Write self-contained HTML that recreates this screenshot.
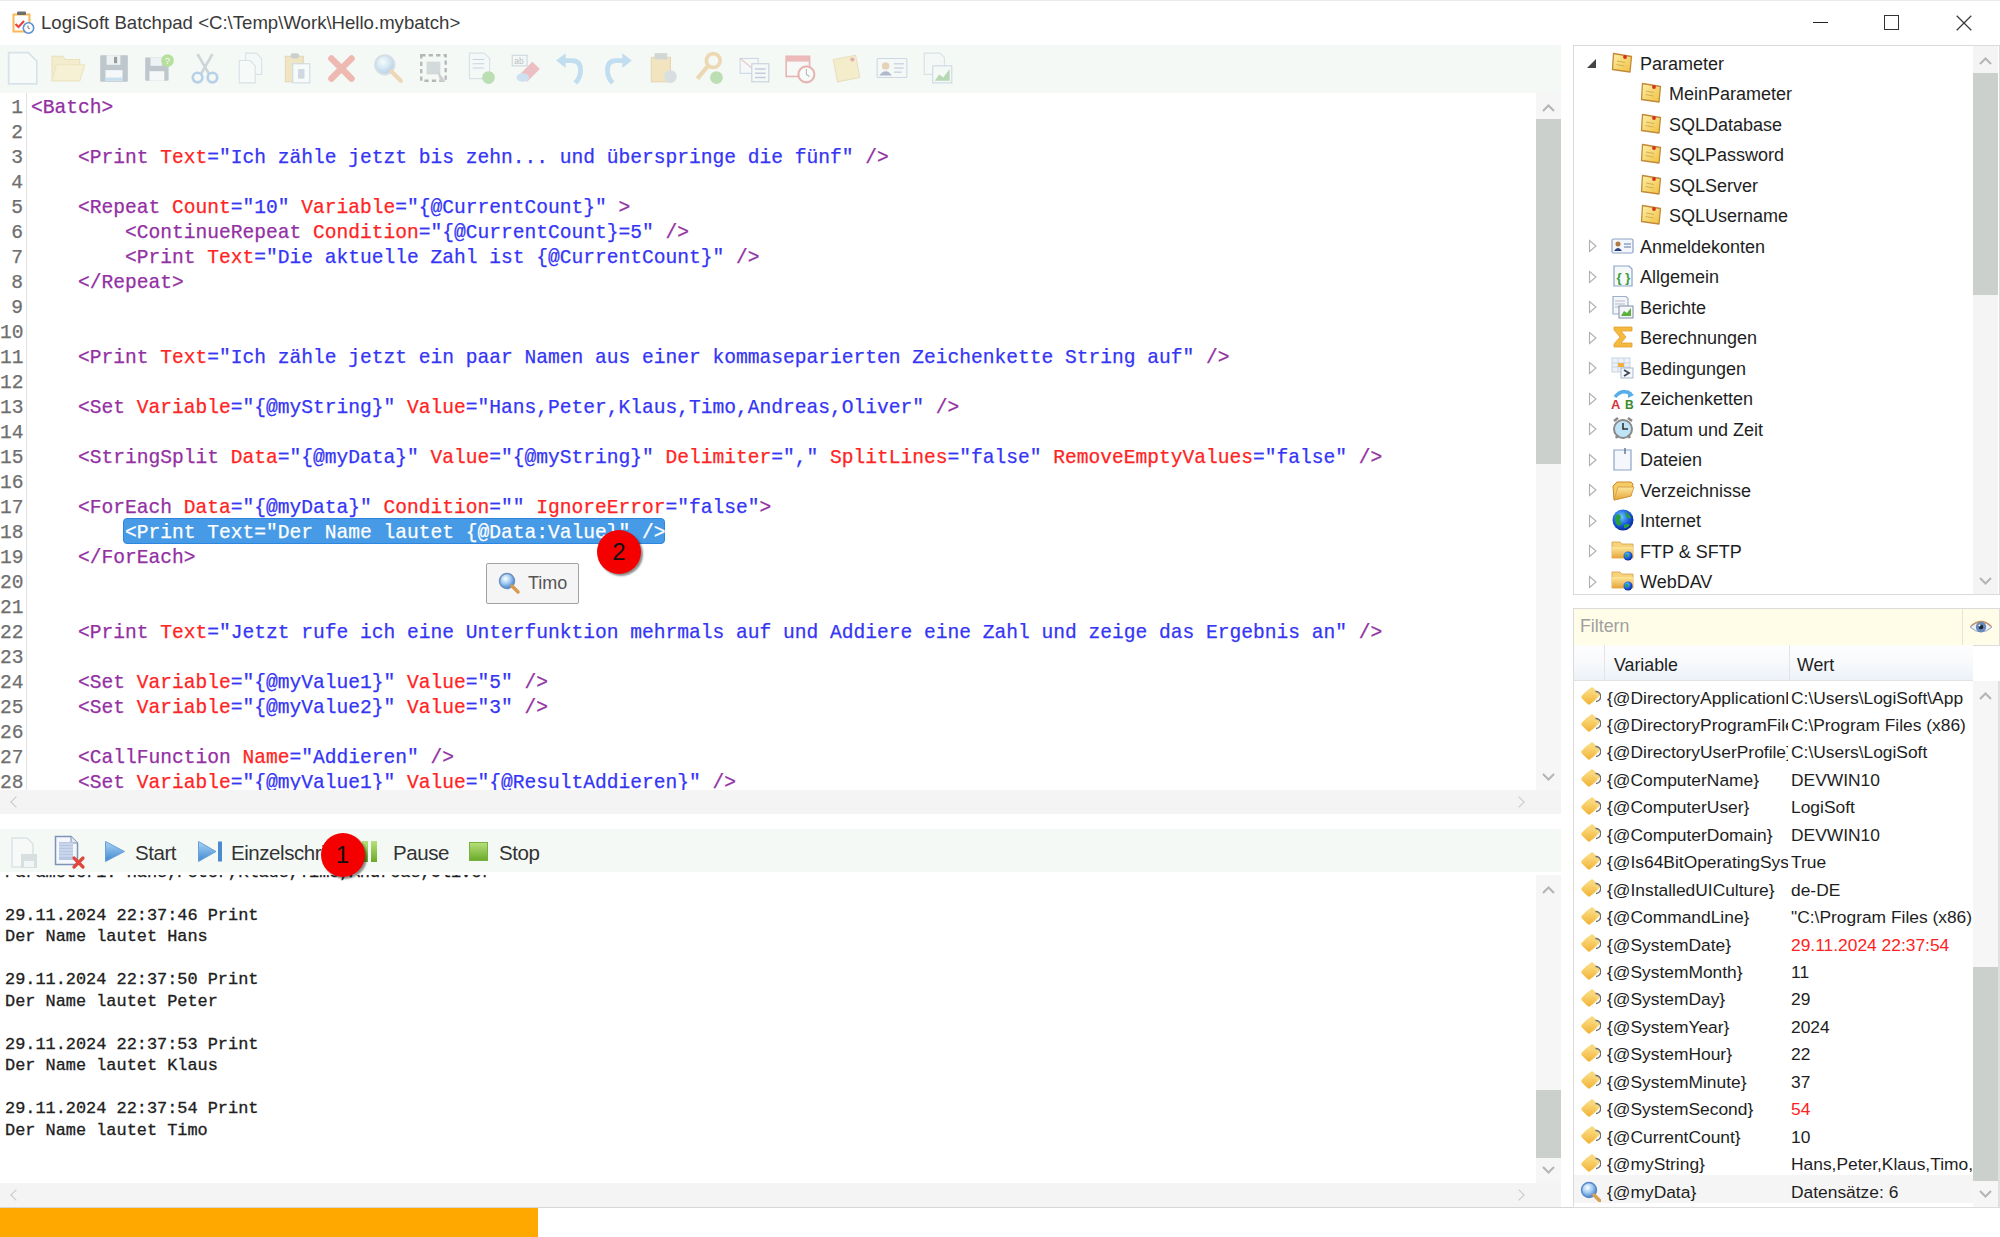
<!DOCTYPE html><html><head><meta charset="utf-8"><style>*{margin:0;padding:0;box-sizing:border-box}
html,body{width:2000px;height:1237px;overflow:hidden;background:#fff;position:relative;font-family:"Liberation Sans",sans-serif;color:#1e1e1e}
#title{position:absolute;left:0;top:0;width:2000px;height:45px;background:#fff;border-top:1px solid #ebebeb}
.ttext{position:absolute;left:41px;top:10.5px;font-size:18.6px;color:#3a3a3a;white-space:nowrap}
.wmin{position:absolute;left:1813px;top:20.5px;width:15px;height:1.2px;background:#222}
.wmax{position:absolute;left:1884px;top:14px;width:15px;height:15px;border:1.5px solid #333}
#tb1{position:absolute;left:0;top:45px;width:1561px;height:48px;background:#f4f9f6}
#editor{position:absolute;left:0;top:93px;width:1536px;height:697px;background:#fff;overflow:hidden;font-family:"Liberation Mono",monospace;font-size:19.58px;-webkit-text-stroke-width:0.25px}
.gutter{position:absolute;left:26px;top:0;width:1px;height:698px;background:#e2e2e2}
.cl{position:absolute;left:31px;height:25px;line-height:25px;white-space:pre;color:#000}
.ln{position:absolute;left:0;width:23px;text-align:right;height:25px;line-height:25px;color:#6f6f6f}
.p{color:#9330a3}
.r{color:#ff2424}
.b{color:#3535f5}
.hlbg{position:absolute;left:123px;width:542px;height:25.5px;border-radius:4px;background:#479be6;border:1px solid #2e86de}
.vscroll{position:absolute;width:25px;background:#f6f6f6}
.vscroll .thumb{position:absolute;left:0;width:25px;background:#ccd0cd}
.vscroll .up{position:absolute;left:6px;top:11px;width:13px;height:8px;background:no-repeat}
.vscroll .dn{position:absolute;left:6px;bottom:9px;width:13px;height:8px}
.hscroll{position:absolute;height:24px;background:#f4f4f4}
.hscroll .lt{position:absolute;left:12px;top:8px;width:8px;height:8px;border-left:1.5px solid #c8c8c8;border-bottom:1.5px solid #c8c8c8;transform:rotate(45deg)}
.hscroll .rt{position:absolute;top:8px;width:8px;height:8px;border-right:1.5px solid #c8c8c8;border-top:1.5px solid #c8c8c8;transform:rotate(45deg)}
.badge{position:absolute;width:44px;height:44px;border-radius:50%;background:#f50000;color:#111;font-size:24px;text-align:center;line-height:44px;box-shadow:2px 2px 2px rgba(0,0,0,.45)}
#tb2{position:absolute;left:0;top:829px;width:1561px;height:43px;background:#f4f9f6}
.tb2t{position:absolute;top:11.5px;font-size:20.5px;letter-spacing:-0.45px;color:#333;white-space:nowrap}
#output{position:absolute;left:0;top:875px;width:1536px;height:308px;background:#fff;overflow:hidden}
.ol{position:absolute;left:5px;font-family:"Liberation Mono",monospace;font-size:16.9px;line-height:20px;white-space:pre;color:#202020;-webkit-text-stroke:0.3px #202020}
#prog{position:absolute;left:0;top:1207px;width:2000px;height:30px;background:#fff;border-top:1px solid #d6d6d6}
#prog .bar{position:absolute;left:0;top:0;width:538px;height:30px;background:#ffa800}
#tree{position:absolute;left:1573px;top:45px;width:427px;height:550px;border:1px solid #dadada;background:#fff}
.tlabel{position:absolute;font-size:18px;line-height:30px;color:#1e1e1e;white-space:nowrap}
.ticon{position:absolute;width:22px;height:22px}
.arr{position:absolute}
.tsb{background:#f4f4f4}
#filter{position:absolute;left:1573px;top:608px;width:427px;height:38px;background:#fffde8;border:1px solid #dcdcdc}
#filter span{position:absolute;left:6px;top:7px;font-size:17.8px;color:#a0a0a0}
#ghead{position:absolute;left:1573px;top:645px;width:400px;height:36px;background:linear-gradient(#fdfdfe 0%,#f9fafc 45%,#edf2f8 100%);border-left:1px solid #dcdcdc;border-bottom:1px solid #e2e2e2}
#ghead .rh{position:absolute;left:0;top:0;width:31px;height:35px;border-right:1px solid #e4e4e4}#ghead .sep2{position:absolute;left:215px;top:0;width:1px;height:35px;background:#e4e4e4}
#ghead .c1{position:absolute;left:40px;top:10px;font-size:17.8px;color:#1e1e1e}
#ghead .c2{position:absolute;left:223px;top:10px;font-size:17.8px;color:#1e1e1e}
#grid{position:absolute;left:1573px;top:681px;width:427px;height:527px;border-left:1px solid #dcdcdc;border-right:2px solid #e0e0e0;border-bottom:1px solid #dcdcdc;background:#fff}
.grow{position:absolute;left:0;width:399px;height:27.45px}
.grow.sel{background:#f5f5f5}
.gicon{position:absolute;left:5px;top:5px;width:22px;height:22px}
.gv{position:absolute;left:33px;top:6.5px;width:181px;overflow:hidden;white-space:nowrap;font-size:17.4px;color:#1e1e1e}
.gw{position:absolute;left:217px;top:6.5px;width:181px;overflow:hidden;white-space:nowrap;font-size:17.4px;color:#1e1e1e}
.gw.red{color:#f22}
</style></head><body><svg width="0" height="0" style="position:absolute"><defs>
<linearGradient id="gNote" x1="0" y1="0" x2="1" y2="1"><stop offset="0" stop-color="#fdf0a8"/><stop offset="1" stop-color="#f0c040"/></linearGradient>
<linearGradient id="gTag" x1="0" y1="0" x2="1" y2="1"><stop offset="0" stop-color="#fde08a"/><stop offset="1" stop-color="#f0b030"/></linearGradient>
<linearGradient id="gFold" x1="0" y1="0" x2="0" y2="1"><stop offset="0" stop-color="#fce79a"/><stop offset="1" stop-color="#e8a53a"/></linearGradient>
<radialGradient id="gGlobe" cx="0.4" cy="0.35" r="0.65"><stop offset="0" stop-color="#6fd0ff"/><stop offset="0.6" stop-color="#1d5fe0"/><stop offset="1" stop-color="#0a2a9a"/></radialGradient>
<linearGradient id="gPlay" x1="0" y1="0" x2="0" y2="1"><stop offset="0" stop-color="#a9d4f5"/><stop offset="1" stop-color="#3f88d0"/></linearGradient>
<linearGradient id="gGreen" x1="0" y1="0" x2="0" y2="1"><stop offset="0" stop-color="#b8e07a"/><stop offset="1" stop-color="#6aaa2a"/></linearGradient>
<radialGradient id="gLens" cx="0.4" cy="0.35" r="0.7"><stop offset="0" stop-color="#ffffff"/><stop offset="0.5" stop-color="#9cc8f0"/><stop offset="1" stop-color="#3a78c8"/></radialGradient>
</defs></svg><div id="title"><svg width="24" height="24" viewBox="0 0 24 24" style="position:absolute;left:11px;top:8.5px"><path d="M2.5 4.5 H18.5 V21.5 H2.5 Z" fill="#fff" stroke="#f9b955" stroke-width="2"/><rect x="6" y="1.5" width="9" height="3.5" rx="1" fill="#6e6e6e"/><path d="M4.5 14 L7.5 17 L13 11" fill="none" stroke="#e8453c" stroke-width="2.2"/><circle cx="17.5" cy="18" r="5.2" fill="#fff" stroke="#5a92d3" stroke-width="1.6"/><path d="M17 15.5 V18 L19 19" stroke="#777" fill="none" stroke-width="1"/></svg><div class="ttext">LogiSoft Batchpad &lt;C:\Temp\Work\Hello.mybatch&gt;</div><div class="wmin"></div><div class="wmax"></div><svg width="16" height="16" viewBox="0 0 16 16" style="position:absolute;left:1956px;top:13.5px"><path d="M0.7 0.7 L15.3 15.3 M15.3 0.7 L0.7 15.3" stroke="#3a3a3a" stroke-width="1.25"/></svg></div><div id="tb1"><div style="position:absolute;left:6px;top:6px;width:34px;height:34px;opacity:0.36"><svg width="34" height="34" viewBox="0 0 32 32" style=""><path d="M2.5 1.5 H21 L29 9.5 V31 H2.5 Z" fill="#fbfcfe" stroke="#a8bcd4" stroke-width="1.6"/></svg></div><div style="position:absolute;left:51px;top:6px;width:34px;height:34px;opacity:0.36"><svg width="34" height="34" viewBox="0 0 32 32" style=""><path d="M1 5 H11 L13.5 8 H27 V28 H1 Z" fill="#f2d98a" stroke="#dcb458"/><path d="M5 13 H32 L27 28 H1 Z" fill="#fbe49a" stroke="#e2c060"/></svg></div><div style="position:absolute;left:97px;top:6px;width:34px;height:34px;opacity:0.5"><svg width="34" height="34" viewBox="0 0 32 32" style=""><rect x="3" y="4" width="26" height="25" rx="1" fill="#8a96a4"/><rect x="9" y="4" width="13" height="9" fill="#e8eef4"/><rect x="16" y="5.5" width="3" height="6" fill="#444"/><rect x="8" y="18" width="16" height="10" fill="#f4f8fb"/><rect x="8" y="25" width="16" height="3" fill="#9cc6e6"/></svg></div><div style="position:absolute;left:142px;top:6px;width:34px;height:34px;opacity:0.5"><svg width="34" height="34" viewBox="0 0 32 32" style=""><rect x="3" y="6" width="22" height="22" rx="1" fill="#8a96a4"/><rect x="8" y="6" width="11" height="8" fill="#e8eef4"/><rect x="7" y="19" width="14" height="9" fill="#f4f8fb"/><circle cx="24" cy="9" r="6" fill="#7cc84a"/><text x="21.5" y="12.5" font-size="9" fill="#fff" font-family="Liberation Sans">?</text></svg></div><div style="position:absolute;left:188px;top:6px;width:34px;height:34px;opacity:0.36"><svg width="34" height="34" viewBox="0 0 32 32" style=""><path d="M9 3 L20 22 M23 3 L12 22" stroke="#8a96a4" stroke-width="2.5"/><circle cx="9" cy="25" r="4.5" fill="none" stroke="#4a8ad0" stroke-width="2.5"/><circle cx="23" cy="25" r="4.5" fill="none" stroke="#4a8ad0" stroke-width="2.5"/></svg></div><div style="position:absolute;left:234px;top:6px;width:34px;height:34px;opacity:0.36"><svg width="34" height="34" viewBox="0 0 32 32" style=""><path d="M11 2 H21 L26 7 V22 H11 Z" fill="#f6f8fb" stroke="#a8b8cc"/><path d="M5 9 H15 L20 14 V30 H5 Z" fill="#fbfcfe" stroke="#a8b8cc"/></svg></div><div style="position:absolute;left:280px;top:6px;width:34px;height:34px;opacity:0.36"><svg width="34" height="34" viewBox="0 0 32 32" style=""><rect x="5" y="5" width="17" height="24" fill="#eac26a" stroke="#c8a050"/><rect x="10" y="2" width="8" height="5" rx="2" fill="#888"/><rect x="12" y="12" width="16" height="18" fill="#fafcfe" stroke="#8ea4c0"/><rect x="17" y="17" width="6" height="9" fill="#8aa0c0"/></svg></div><div style="position:absolute;left:325px;top:6px;width:34px;height:34px;opacity:0.36"><svg width="34" height="34" viewBox="0 0 32 32" style=""><path d="M6 7 L25 26 M25 7 L6 26" stroke="#e44a3a" stroke-width="6" stroke-linecap="round"/></svg></div><div style="position:absolute;left:371px;top:6px;width:34px;height:34px;opacity:0.36"><svg width="34" height="34" viewBox="0 0 32 32" style=""><circle cx="13" cy="13" r="9" fill="url(#gLens)" stroke="#9cb0c8" stroke-width="2"/><path d="M19 19 L28 28" stroke="#e0a050" stroke-width="4" stroke-linecap="round"/></svg></div><div style="position:absolute;left:417px;top:6px;width:34px;height:34px;opacity:0.36"><svg width="34" height="34" viewBox="0 0 32 32" style=""><rect x="4" y="4" width="23" height="24" fill="none" stroke="#444" stroke-width="2.2" stroke-dasharray="4 3"/><rect x="9" y="10" width="13" height="12" fill="#9aa4ae"/><path d="M19 18 L27 29 L22 29 Z" fill="#888"/></svg></div><div style="position:absolute;left:463px;top:6px;width:34px;height:34px;opacity:0.36"><svg width="34" height="34" viewBox="0 0 32 32" style=""><path d="M6 2 H20 L25 7 V26 H6 Z" fill="#f6f8fb" stroke="#a8b8cc"/><path d="M9 8 H20 M9 12 H20 M9 16 H20" stroke="#7a96c0"/><circle cx="24" cy="25" r="6" fill="#5ab040"/></svg></div><div style="position:absolute;left:509px;top:6px;width:34px;height:34px;opacity:0.36"><svg width="34" height="34" viewBox="0 0 32 32" style=""><rect x="3" y="4" width="14" height="10" fill="#f4f6f9" stroke="#8a9aae"/><text x="5" y="12" font-size="8" fill="#555" font-family="Liberation Sans">ab</text><path d="M10 22 L22 10 L29 17 L17 29 Z" fill="#e05a6a"/><ellipse cx="13" cy="25" rx="6" ry="4" fill="#8cb8e8"/></svg></div><div style="position:absolute;left:554px;top:6px;width:34px;height:34px;opacity:0.36"><svg width="34" height="34" viewBox="0 0 32 32" style=""><path d="M9 9 H17 Q25 9 25 18 Q25 25 20 30" fill="none" stroke="#6aaee8" stroke-width="4.5"/><path d="M2 9 L11 2 L11 16 Z" fill="#6aaee8"/></svg></div><div style="position:absolute;left:600px;top:6px;width:34px;height:34px;opacity:0.36"><svg width="34" height="34" viewBox="0 0 32 32" style=""><path d="M23 9 H15 Q7 9 7 18 Q7 25 12 30" fill="none" stroke="#6aaee8" stroke-width="4.5"/><path d="M30 9 L21 2 L21 16 Z" fill="#6aaee8"/></svg></div><div style="position:absolute;left:646px;top:6px;width:34px;height:34px;opacity:0.36"><svg width="34" height="34" viewBox="0 0 32 32" style=""><rect x="5" y="6" width="18" height="23" fill="#f0c060" stroke="#c89a40"/><rect x="8" y="2" width="12" height="6" fill="#999"/><circle cx="23" cy="24" r="6" fill="#aab4be"/></svg></div><div style="position:absolute;left:692px;top:6px;width:34px;height:34px;opacity:0.36"><svg width="34" height="34" viewBox="0 0 32 32" style=""><circle cx="20" cy="9" r="6.5" fill="none" stroke="#e0a040" stroke-width="3.5"/><path d="M16 13 L5 26" stroke="#e0a040" stroke-width="4"/><circle cx="23" cy="25" r="6" fill="#5ab040"/></svg></div><div style="position:absolute;left:738px;top:6px;width:34px;height:34px;opacity:0.36"><svg width="34" height="34" viewBox="0 0 32 32" style=""><rect x="2" y="7" width="17" height="14" fill="#f6f8fb" stroke="#8a9ac8"/><path d="M2 7 L19 21" stroke="#e05a5a"/><rect x="13" y="12" width="16" height="17" fill="#f6f8fb" stroke="#7a8aa8"/><path d="M16 17 H26 M16 21 H26 M16 25 H26" stroke="#6a80b0" stroke-width="1.5"/></svg></div><div style="position:absolute;left:783px;top:6px;width:34px;height:34px;opacity:0.36"><svg width="34" height="34" viewBox="0 0 32 32" style=""><rect x="3" y="5" width="22" height="19" fill="#fafafa" stroke="#d04040" stroke-width="1.5"/><rect x="3" y="5" width="22" height="5" fill="#e05050"/><circle cx="22" cy="22" r="7.5" fill="#fff" stroke="#d04040" stroke-width="2"/><path d="M22 17 V22 L25 24" stroke="#444" fill="none"/></svg></div><div style="position:absolute;left:829px;top:6px;width:34px;height:34px;opacity:0.36"><svg width="34" height="34" viewBox="0 0 32 32" style=""><path d="M4 8 L25 4 L29 25 L8 29 Z" fill="#f6d880" stroke="#d8b060"/><circle cx="22" cy="8" r="2" fill="#d03030"/></svg></div><div style="position:absolute;left:875px;top:6px;width:34px;height:34px;opacity:0.36"><svg width="34" height="34" viewBox="0 0 32 32" style=""><rect x="2" y="7" width="28" height="18" rx="1" fill="#f4f7fa" stroke="#8a9ac0"/><circle cx="10" cy="14" r="3.5" fill="#c89050"/><path d="M4 23 Q10 15 16 23 Z" fill="#3a4a80"/><path d="M18 12 H27 M18 16 H27 M18 20 H25" stroke="#8a9ac0" stroke-width="1.5"/></svg></div><div style="position:absolute;left:921px;top:6px;width:34px;height:34px;opacity:0.36"><svg width="34" height="34" viewBox="0 0 32 32" style=""><path d="M3 2 H18 L22 6 V22 H3 Z" fill="#f6f8fb" stroke="#a8b8cc"/><rect x="11" y="14" width="18" height="16" fill="#f6f8fb" stroke="#8a9ac0"/><path d="M13 28 L17 22 L21 25 L27 17 V28 Z" fill="#4aa040"/></svg></div></div><div id="editor"><div class="gutter"></div><div class="cl" style="top:3px"><span class="p">&lt;Batch</span><span class="p">&gt;</span></div>
<div class="ln" style="top:3px">1</div>
<div class="cl" style="top:28px"></div>
<div class="ln" style="top:28px">2</div>
<div class="cl" style="top:53px">&nbsp;&nbsp;&nbsp;&nbsp;<span class="p">&lt;Print</span>&nbsp;<span class="r">Text</span><span class="b">="Ich zähle jetzt bis zehn... und überspringe die fünf"</span>&nbsp;<span class="p">/&gt;</span></div>
<div class="ln" style="top:53px">3</div>
<div class="cl" style="top:78px"></div>
<div class="ln" style="top:78px">4</div>
<div class="cl" style="top:103px">&nbsp;&nbsp;&nbsp;&nbsp;<span class="p">&lt;Repeat</span>&nbsp;<span class="r">Count</span><span class="b">="10"</span>&nbsp;<span class="r">Variable</span><span class="b">="{@CurrentCount}"</span>&nbsp;<span class="p">&gt;</span></div>
<div class="ln" style="top:103px">5</div>
<div class="cl" style="top:128px">&nbsp;&nbsp;&nbsp;&nbsp;&nbsp;&nbsp;&nbsp;&nbsp;<span class="p">&lt;ContinueRepeat</span>&nbsp;<span class="r">Condition</span><span class="b">="{@CurrentCount}=5"</span>&nbsp;<span class="p">/&gt;</span></div>
<div class="ln" style="top:128px">6</div>
<div class="cl" style="top:153px">&nbsp;&nbsp;&nbsp;&nbsp;&nbsp;&nbsp;&nbsp;&nbsp;<span class="p">&lt;Print</span>&nbsp;<span class="r">Text</span><span class="b">="Die aktuelle Zahl ist {@CurrentCount}"</span>&nbsp;<span class="p">/&gt;</span></div>
<div class="ln" style="top:153px">7</div>
<div class="cl" style="top:178px">&nbsp;&nbsp;&nbsp;&nbsp;<span class="p">&lt;/Repeat</span><span class="p">&gt;</span></div>
<div class="ln" style="top:178px">8</div>
<div class="cl" style="top:203px"></div>
<div class="ln" style="top:203px">9</div>
<div class="cl" style="top:228px"></div>
<div class="ln" style="top:228px">10</div>
<div class="cl" style="top:253px">&nbsp;&nbsp;&nbsp;&nbsp;<span class="p">&lt;Print</span>&nbsp;<span class="r">Text</span><span class="b">="Ich zähle jetzt ein paar Namen aus einer kommaseparierten Zeichenkette String auf"</span>&nbsp;<span class="p">/&gt;</span></div>
<div class="ln" style="top:253px">11</div>
<div class="cl" style="top:278px"></div>
<div class="ln" style="top:278px">12</div>
<div class="cl" style="top:303px">&nbsp;&nbsp;&nbsp;&nbsp;<span class="p">&lt;Set</span>&nbsp;<span class="r">Variable</span><span class="b">="{@myString}"</span>&nbsp;<span class="r">Value</span><span class="b">="Hans,Peter,Klaus,Timo,Andreas,Oliver"</span>&nbsp;<span class="p">/&gt;</span></div>
<div class="ln" style="top:303px">13</div>
<div class="cl" style="top:328px"></div>
<div class="ln" style="top:328px">14</div>
<div class="cl" style="top:353px">&nbsp;&nbsp;&nbsp;&nbsp;<span class="p">&lt;StringSplit</span>&nbsp;<span class="r">Data</span><span class="b">="{@myData}"</span>&nbsp;<span class="r">Value</span><span class="b">="{@myString}"</span>&nbsp;<span class="r">Delimiter</span><span class="b">=","</span>&nbsp;<span class="r">SplitLines</span><span class="b">="false"</span>&nbsp;<span class="r">RemoveEmptyValues</span><span class="b">="false"</span>&nbsp;<span class="p">/&gt;</span></div>
<div class="ln" style="top:353px">15</div>
<div class="cl" style="top:378px"></div>
<div class="ln" style="top:378px">16</div>
<div class="cl" style="top:403px">&nbsp;&nbsp;&nbsp;&nbsp;<span class="p">&lt;ForEach</span>&nbsp;<span class="r">Data</span><span class="b">="{@myData}"</span>&nbsp;<span class="r">Condition</span><span class="b">=""</span>&nbsp;<span class="r">IgnoreError</span><span class="b">="false"</span><span class="p">&gt;</span></div>
<div class="ln" style="top:403px">17</div>
<div class="hlbg" style="top:425px"></div><div class="cl" style="top:428px;color:#fff">&nbsp;&nbsp;&nbsp;&nbsp;&nbsp;&nbsp;&nbsp;&nbsp;&lt;Print Text="Der Name lautet {@Data:Value}" /&gt;</div>
<div class="ln" style="top:428px">18</div>
<div class="cl" style="top:453px">&nbsp;&nbsp;&nbsp;&nbsp;<span class="p">&lt;/ForEach</span><span class="p">&gt;</span></div>
<div class="ln" style="top:453px">19</div>
<div class="cl" style="top:478px"></div>
<div class="ln" style="top:478px">20</div>
<div class="cl" style="top:503px"></div>
<div class="ln" style="top:503px">21</div>
<div class="cl" style="top:528px">&nbsp;&nbsp;&nbsp;&nbsp;<span class="p">&lt;Print</span>&nbsp;<span class="r">Text</span><span class="b">="Jetzt rufe ich eine Unterfunktion mehrmals auf und Addiere eine Zahl und zeige das Ergebnis an"</span>&nbsp;<span class="p">/&gt;</span></div>
<div class="ln" style="top:528px">22</div>
<div class="cl" style="top:553px"></div>
<div class="ln" style="top:553px">23</div>
<div class="cl" style="top:578px">&nbsp;&nbsp;&nbsp;&nbsp;<span class="p">&lt;Set</span>&nbsp;<span class="r">Variable</span><span class="b">="{@myValue1}"</span>&nbsp;<span class="r">Value</span><span class="b">="5"</span>&nbsp;<span class="p">/&gt;</span></div>
<div class="ln" style="top:578px">24</div>
<div class="cl" style="top:603px">&nbsp;&nbsp;&nbsp;&nbsp;<span class="p">&lt;Set</span>&nbsp;<span class="r">Variable</span><span class="b">="{@myValue2}"</span>&nbsp;<span class="r">Value</span><span class="b">="3"</span>&nbsp;<span class="p">/&gt;</span></div>
<div class="ln" style="top:603px">25</div>
<div class="cl" style="top:628px"></div>
<div class="ln" style="top:628px">26</div>
<div class="cl" style="top:653px">&nbsp;&nbsp;&nbsp;&nbsp;<span class="p">&lt;CallFunction</span>&nbsp;<span class="r">Name</span><span class="b">="Addieren"</span>&nbsp;<span class="p">/&gt;</span></div>
<div class="ln" style="top:653px">27</div>
<div class="cl" style="top:678px">&nbsp;&nbsp;&nbsp;&nbsp;<span class="p">&lt;Set</span>&nbsp;<span class="r">Variable</span><span class="b">="{@myValue1}"</span>&nbsp;<span class="r">Value</span><span class="b">="{@ResultAddieren}"</span>&nbsp;<span class="p">/&gt;</span></div>
<div class="ln" style="top:678px">28</div></div><div class="vscroll" style="left:1536px;top:93px;height:697px"><svg class="up" viewBox="0 0 13 8"><path d="M1 7 L6.5 1.5 L12 7" fill="none" stroke="#b4b4b4" stroke-width="2"/></svg><div class="thumb" style="top:26px;height:345px"></div><svg class="dn" viewBox="0 0 13 8"><path d="M1 1 L6.5 6.5 L12 1" fill="none" stroke="#b4b4b4" stroke-width="2"/></svg></div><div class="hscroll" style="left:0;top:790px;width:1561px"><div class="lt"></div><div class="rt" style="left:1515px"></div></div><div style="position:absolute;left:486px;top:563px;width:93px;height:41px;background:#f5f5f5;border:1.5px solid #a2a2a2;border-radius:2px"><div style="position:absolute;left:10px;top:7px"><svg width="24" height="24" viewBox="0 0 24 24" style=""><circle cx="10" cy="10" r="7.5" fill="url(#gLens)" stroke="#6a90c0" stroke-width="1.5"/><path d="M15 15 L21 21" stroke="#d89a50" stroke-width="3.5" stroke-linecap="round"/></svg></div><div style="position:absolute;left:41px;top:9px;font-size:18px;color:#555">Timo</div></div><div class="badge" style="left:597px;top:530px">2</div><div id="tb2"><div style="position:absolute;left:9px;top:7px;opacity:.3"><svg width="30" height="34" viewBox="0 0 30 34" style=""><path d="M3 2 H18 L24 8 V31 H3 Z" fill="#fbfcfe" stroke="#a0b0c4" stroke-width="1.5"/><rect x="12" y="18" width="16" height="14" fill="#9aa4ae"/><rect x="15" y="25" width="10" height="6" fill="#eef2f6"/></svg></div><div style="position:absolute;left:53px;top:5px"><svg width="34" height="36" viewBox="0 0 34 36" style=""><path d="M2.5 2.5 H18 L24.5 9 V30.5 H2.5 Z" fill="#f4f7fb" stroke="#7e93b8" stroke-width="1.5"/><path d="M18 2.5 V9 H24.5" fill="#dfe7f2" stroke="#7e93b8"/><rect x="6" y="8" width="14" height="18" fill="#b8c8e4"/><path d="M6 10 H20 M6 13 H20 M6 16 H20 M6 19 H20 M6 22 H20" stroke="#dfe7f2" stroke-width="0.8"/><path d="M21 24 L30 33 M30 24 L21 33" stroke="#e0463a" stroke-width="3.2" stroke-linecap="round"/></svg></div><div style="position:absolute;left:104px;top:11px"><svg width="22" height="23" viewBox="0 0 22 23" style=""><path d="M1.5 1.5 L20.5 11.5 L1.5 21.5 Z" fill="url(#gPlay)" stroke="#6aa0d8" stroke-width="1"/></svg></div><div class="tb2t" style="left:135px">Start</div><div style="position:absolute;left:197px;top:11px"><svg width="27" height="23" viewBox="0 0 27 23" style=""><path d="M1.5 1.5 L19 11.5 L1.5 21.5 Z" fill="url(#gPlay)" stroke="#6aa0d8" stroke-width="1"/><rect x="21" y="1.5" width="4" height="20" fill="#4a8ad0"/></svg></div><div class="tb2t" style="left:231px">Einzelschri</div><div style="position:absolute;left:358px;top:11px"><svg width="22" height="23" viewBox="0 0 22 23" style=""><rect x="4" y="1" width="6" height="21" fill="url(#gGreen)"/><rect x="13" y="1" width="6" height="21" fill="url(#gGreen)"/></svg></div><div class="tb2t" style="left:393px">Pause</div><div style="position:absolute;left:469px;top:13px"><svg width="19" height="19" viewBox="0 0 19 19" style=""><rect x="0.5" y="0.5" width="18" height="18" fill="url(#gGreen)" stroke="#7ab040"/></svg></div><div class="tb2t" style="left:499px">Stop</div></div><div id="output"><div class="ol" style="top:-12.5px">Parameter1: Hans,Peter,Klaus,Timo,Andreas,Oliver</div><div class="ol" style="top:9.0px"></div><div class="ol" style="top:30.5px">29.11.2024 22:37:46 Print</div><div class="ol" style="top:52.0px">Der Name lautet Hans</div><div class="ol" style="top:73.5px"></div><div class="ol" style="top:95.0px">29.11.2024 22:37:50 Print</div><div class="ol" style="top:116.5px">Der Name lautet Peter</div><div class="ol" style="top:138.0px"></div><div class="ol" style="top:159.5px">29.11.2024 22:37:53 Print</div><div class="ol" style="top:181.0px">Der Name lautet Klaus</div><div class="ol" style="top:202.5px"></div><div class="ol" style="top:224.0px">29.11.2024 22:37:54 Print</div><div class="ol" style="top:245.5px">Der Name lautet Timo</div></div><div class="vscroll" style="left:1536px;top:875px;height:308px"><svg class="up" viewBox="0 0 13 8"><path d="M1 7 L6.5 1.5 L12 7" fill="none" stroke="#b4b4b4" stroke-width="2"/></svg><div class="thumb" style="top:215px;height:68px"></div><svg class="dn" viewBox="0 0 13 8"><path d="M1 1 L6.5 6.5 L12 1" fill="none" stroke="#b4b4b4" stroke-width="2"/></svg></div><div class="hscroll" style="left:0;top:1183px;width:1561px"><div class="lt"></div><div class="rt" style="left:1515px"></div></div><div class="badge" style="left:320.5px;top:832.5px">1</div><div id="prog"><div class="bar"></div></div><div id="tree"></div><svg class="arr" style="left:1586px;top:58.0px" width="12" height="12" viewBox="0 0 12 12"><path d="M10 1 L10 10 L1 10 Z" fill="#444"/></svg><div class="ticon" style="left:1610.5px;top:50.7px"><svg width="24" height="24" viewBox="0 0 24 24" style=""><path d="M2.5 2.5 L20.5 5.5 L19 21 L1.5 18.5 Z" fill="url(#gNote)" stroke="#c08a3a" stroke-width="1.3" stroke-linejoin="round"/><path d="M6 10 L14 11.5 M5.5 13.5 L13.5 15" stroke="#cfa850" stroke-width="0.9"/><circle cx="14" cy="6" r="1.9" fill="#d5301f"/></svg></div><div class="tlabel" style="left:1640px;top:48.7px">Parameter</div><div class="ticon" style="left:1639.5px;top:81.2px"><svg width="24" height="24" viewBox="0 0 24 24" style=""><path d="M2.5 2.5 L20.5 5.5 L19 21 L1.5 18.5 Z" fill="url(#gNote)" stroke="#c08a3a" stroke-width="1.3" stroke-linejoin="round"/><path d="M6 10 L14 11.5 M5.5 13.5 L13.5 15" stroke="#cfa850" stroke-width="0.9"/><circle cx="14" cy="6" r="1.9" fill="#d5301f"/></svg></div><div class="tlabel" style="left:1669px;top:79.2px">MeinParameter</div><div class="ticon" style="left:1639.5px;top:111.7px"><svg width="24" height="24" viewBox="0 0 24 24" style=""><path d="M2.5 2.5 L20.5 5.5 L19 21 L1.5 18.5 Z" fill="url(#gNote)" stroke="#c08a3a" stroke-width="1.3" stroke-linejoin="round"/><path d="M6 10 L14 11.5 M5.5 13.5 L13.5 15" stroke="#cfa850" stroke-width="0.9"/><circle cx="14" cy="6" r="1.9" fill="#d5301f"/></svg></div><div class="tlabel" style="left:1669px;top:109.7px">SQLDatabase</div><div class="ticon" style="left:1639.5px;top:142.2px"><svg width="24" height="24" viewBox="0 0 24 24" style=""><path d="M2.5 2.5 L20.5 5.5 L19 21 L1.5 18.5 Z" fill="url(#gNote)" stroke="#c08a3a" stroke-width="1.3" stroke-linejoin="round"/><path d="M6 10 L14 11.5 M5.5 13.5 L13.5 15" stroke="#cfa850" stroke-width="0.9"/><circle cx="14" cy="6" r="1.9" fill="#d5301f"/></svg></div><div class="tlabel" style="left:1669px;top:140.2px">SQLPassword</div><div class="ticon" style="left:1639.5px;top:172.7px"><svg width="24" height="24" viewBox="0 0 24 24" style=""><path d="M2.5 2.5 L20.5 5.5 L19 21 L1.5 18.5 Z" fill="url(#gNote)" stroke="#c08a3a" stroke-width="1.3" stroke-linejoin="round"/><path d="M6 10 L14 11.5 M5.5 13.5 L13.5 15" stroke="#cfa850" stroke-width="0.9"/><circle cx="14" cy="6" r="1.9" fill="#d5301f"/></svg></div><div class="tlabel" style="left:1669px;top:170.7px">SQLServer</div><div class="ticon" style="left:1639.5px;top:203.2px"><svg width="24" height="24" viewBox="0 0 24 24" style=""><path d="M2.5 2.5 L20.5 5.5 L19 21 L1.5 18.5 Z" fill="url(#gNote)" stroke="#c08a3a" stroke-width="1.3" stroke-linejoin="round"/><path d="M6 10 L14 11.5 M5.5 13.5 L13.5 15" stroke="#cfa850" stroke-width="0.9"/><circle cx="14" cy="6" r="1.9" fill="#d5301f"/></svg></div><div class="tlabel" style="left:1669px;top:201.2px">SQLUsername</div><svg class="arr" style="left:1588px;top:239.0px" width="10" height="14" viewBox="0 0 10 14"><path d="M1.5 1.5 L8 7 L1.5 12.5 Z" fill="none" stroke="#b0b0b0" stroke-width="1.1"/></svg><div class="ticon" style="left:1610.5px;top:233.7px"><svg width="24" height="24" viewBox="0 0 24 24" style=""><rect x="1" y="5" width="21" height="14" rx="1.5" fill="#f3f6fa" stroke="#8da3c8" stroke-width="1.2"/><circle cx="7" cy="10" r="2.5" fill="#b07a40"/><path d="M3 17 Q7 11 11 17 Z" fill="#2b3d7a"/><path d="M13 10 H20 M13 13 H20" stroke="#8da3c8" stroke-width="1.3"/></svg></div><div class="tlabel" style="left:1640px;top:231.7px">Anmeldekonten</div><svg class="arr" style="left:1588px;top:269.5px" width="10" height="14" viewBox="0 0 10 14"><path d="M1.5 1.5 L8 7 L1.5 12.5 Z" fill="none" stroke="#b0b0b0" stroke-width="1.1"/></svg><div class="ticon" style="left:1610.5px;top:264.2px"><svg width="24" height="24" viewBox="0 0 24 24" style=""><path d="M3 2 H18 L21 5 V22 H3 Z" fill="#f6f9fc" stroke="#8da3c8" stroke-width="1.2"/><text x="5.5" y="17.5" font-size="13" font-weight="bold" fill="#3a9a3a" font-family="Liberation Sans">{ }</text></svg></div><div class="tlabel" style="left:1640px;top:262.2px">Allgemein</div><svg class="arr" style="left:1588px;top:300.0px" width="10" height="14" viewBox="0 0 10 14"><path d="M1.5 1.5 L8 7 L1.5 12.5 Z" fill="none" stroke="#b0b0b0" stroke-width="1.1"/></svg><div class="ticon" style="left:1610.5px;top:294.7px"><svg width="24" height="24" viewBox="0 0 24 24" style=""><path d="M2 1.5 H15 L17 3.5 V19 H2 Z" fill="#f4f6f9" stroke="#9cb0cc" stroke-width="1.2"/><path d="M4 6 H14 M4 9 H14 M4 12 H14" stroke="#b0b8c8"/><rect x="8" y="11" width="14" height="12" fill="#f4f6f9" stroke="#7e8ca8"/><path d="M10 21 L13 16 L16 18 L20 13 V21 Z" fill="#5cb040"/></svg></div><div class="tlabel" style="left:1640px;top:292.7px">Berichte</div><svg class="arr" style="left:1588px;top:330.5px" width="10" height="14" viewBox="0 0 10 14"><path d="M1.5 1.5 L8 7 L1.5 12.5 Z" fill="none" stroke="#b0b0b0" stroke-width="1.1"/></svg><div class="ticon" style="left:1610.5px;top:325.2px"><svg width="24" height="24" viewBox="0 0 24 24" style=""><path d="M3 2 H21 V6 H10 L15 12 L10 18 H21 V22 H3 V19 L9 12 L3 5 Z" fill="#f4b93e" stroke="#e2a030" stroke-width="0.8"/></svg></div><div class="tlabel" style="left:1640px;top:323.2px">Berechnungen</div><svg class="arr" style="left:1588px;top:361.0px" width="10" height="14" viewBox="0 0 10 14"><path d="M1.5 1.5 L8 7 L1.5 12.5 Z" fill="none" stroke="#b0b0b0" stroke-width="1.1"/></svg><div class="ticon" style="left:1610.5px;top:355.7px"><svg width="24" height="24" viewBox="0 0 24 24" style=""><rect x="1" y="2" width="18" height="14" fill="#eef2f8" stroke="#c8d4e4"/><path d="M1 7 H19 M1 11 H19 M7 2 V16 M13 2 V16" stroke="#c8d4e4"/><rect x="7" y="7" width="6" height="4" fill="#f0b040"/><rect x="10" y="12" width="12" height="10" fill="#f4f7fb" stroke="#a8b8d0"/><path d="M13 14 L18 17 L13 20" fill="none" stroke="#3a4658" stroke-width="1.8"/></svg></div><div class="tlabel" style="left:1640px;top:353.7px">Bedingungen</div><svg class="arr" style="left:1588px;top:391.5px" width="10" height="14" viewBox="0 0 10 14"><path d="M1.5 1.5 L8 7 L1.5 12.5 Z" fill="none" stroke="#b0b0b0" stroke-width="1.1"/></svg><div class="ticon" style="left:1610.5px;top:386.2px"><svg width="24" height="24" viewBox="0 0 24 24" style=""><path d="M4 11 Q11 2 20 8" fill="none" stroke="#5aaee8" stroke-width="3.5"/><path d="M17 4 L23 9 L17 12 Z" fill="#5aaee8"/><text x="0" y="23" font-size="13" font-weight="bold" fill="#d8343a" font-family="Liberation Sans">A</text><text x="14" y="23" font-size="12" font-weight="bold" fill="#3a8a2a" font-family="Liberation Sans">B</text></svg></div><div class="tlabel" style="left:1640px;top:384.2px">Zeichenketten</div><svg class="arr" style="left:1588px;top:422.0px" width="10" height="14" viewBox="0 0 10 14"><path d="M1.5 1.5 L8 7 L1.5 12.5 Z" fill="none" stroke="#b0b0b0" stroke-width="1.1"/></svg><div class="ticon" style="left:1610.5px;top:416.7px"><svg width="24" height="24" viewBox="0 0 24 24" style=""><path d="M3 4 L7 1 M21 4 L17 1" stroke="#888" stroke-width="2.5"/><circle cx="12" cy="12" r="9" fill="#bfe4f8" stroke="#8a8a8a" stroke-width="2"/><path d="M12 6 V12 H17" stroke="#333" stroke-width="1.6" fill="none"/><path d="M5 21 L7 18 M19 21 L17 18" stroke="#888" stroke-width="2.5"/></svg></div><div class="tlabel" style="left:1640px;top:414.7px">Datum und Zeit</div><svg class="arr" style="left:1588px;top:452.5px" width="10" height="14" viewBox="0 0 10 14"><path d="M1.5 1.5 L8 7 L1.5 12.5 Z" fill="none" stroke="#b0b0b0" stroke-width="1.1"/></svg><div class="ticon" style="left:1610.5px;top:447.2px"><svg width="24" height="24" viewBox="0 0 24 24" style=""><path d="M3 3 H20 V23 H3 Z" fill="#f4f7fc" stroke="#8da3c8" stroke-width="1.2"/><path d="M14 1 V7" stroke="#6a7a9a" stroke-width="1.5"/></svg></div><div class="tlabel" style="left:1640px;top:445.2px">Dateien</div><svg class="arr" style="left:1588px;top:483.0px" width="10" height="14" viewBox="0 0 10 14"><path d="M1.5 1.5 L8 7 L1.5 12.5 Z" fill="none" stroke="#b0b0b0" stroke-width="1.1"/></svg><div class="ticon" style="left:1610.5px;top:477.7px"><svg width="24" height="24" viewBox="0 0 24 24" style=""><path d="M2 8 L6 4 H20 L22 6 L20 18 L3 22 Z" fill="#f6cb64" stroke="#c88a30" stroke-width="1"/><path d="M3 22 L7 9 H23 L20 18 Z" fill="url(#gFold)" stroke="#d09840" stroke-width="0.8"/></svg></div><div class="tlabel" style="left:1640px;top:475.7px">Verzeichnisse</div><svg class="arr" style="left:1588px;top:513.5px" width="10" height="14" viewBox="0 0 10 14"><path d="M1.5 1.5 L8 7 L1.5 12.5 Z" fill="none" stroke="#b0b0b0" stroke-width="1.1"/></svg><div class="ticon" style="left:1610.5px;top:508.2px"><svg width="24" height="24" viewBox="0 0 24 24" style=""><circle cx="12" cy="12" r="10.5" fill="url(#gGlobe)"/><path d="M5 7 Q9 5 10 9 Q8 13 11 15 Q9 19 6 17 Q3 12 5 7 Z M14 4 Q19 6 20 10 Q17 11 15 8 Z M13 17 Q17 15 19 17 Q16 21 13 20 Z" fill="#2aa040"/></svg></div><div class="tlabel" style="left:1640px;top:506.2px">Internet</div><svg class="arr" style="left:1588px;top:544.0px" width="10" height="14" viewBox="0 0 10 14"><path d="M1.5 1.5 L8 7 L1.5 12.5 Z" fill="none" stroke="#b0b0b0" stroke-width="1.1"/></svg><div class="ticon" style="left:1610.5px;top:538.7px"><svg width="24" height="24" viewBox="0 0 24 24" style=""><path d="M1 3 H9 L11 5 H22 V19 H1 Z" fill="#f6d27a" stroke="#d8a04a" stroke-width="0.8"/><path d="M1 8 H22 V19 H1 Z" fill="url(#gFold)"/><circle cx="17" cy="17" r="4.5" fill="url(#gGlobe)"/><path d="M14.5 15.5 Q16.5 14 17.5 16.5 Q16 19.5 14.5 17.5 Z" fill="#2aa040"/></svg></div><div class="tlabel" style="left:1640px;top:536.7px">FTP &amp; SFTP</div><svg class="arr" style="left:1588px;top:574.5px" width="10" height="14" viewBox="0 0 10 14"><path d="M1.5 1.5 L8 7 L1.5 12.5 Z" fill="none" stroke="#b0b0b0" stroke-width="1.1"/></svg><div class="ticon" style="left:1610.5px;top:569.2px"><svg width="24" height="24" viewBox="0 0 24 24" style=""><path d="M1 3 H9 L11 5 H22 V19 H1 Z" fill="#f6d27a" stroke="#d8a04a" stroke-width="0.8"/><path d="M1 8 H22 V19 H1 Z" fill="url(#gFold)"/><circle cx="17" cy="17" r="4.5" fill="url(#gGlobe)"/><path d="M14.5 15.5 Q16.5 14 17.5 16.5 Q16 19.5 14.5 17.5 Z" fill="#2aa040"/></svg></div><div class="tlabel" style="left:1640px;top:567.2px">WebDAV</div><div class="vscroll tsb" style="left:1973px;top:46px;height:548px"><svg class="up" viewBox="0 0 13 8"><path d="M1 7 L6.5 1.5 L12 7" fill="none" stroke="#b4b4b4" stroke-width="2"/></svg><div class="thumb" style="top:27px;height:222px"></div><svg class="dn" viewBox="0 0 13 8"><path d="M1 1 L6.5 6.5 L12 1" fill="none" stroke="#b4b4b4" stroke-width="2"/></svg></div><div id="filter"><span>Filtern</span></div><div style="position:absolute;left:1962px;top:609px;width:1px;height:36px;background:#e6e6d8"></div><div style="position:absolute;left:1969px;top:618px"><svg width="24" height="18" viewBox="0 0 24 18" style=""><path d="M1 9 Q12 -1 23 9 Q12 19 1 9 Z" fill="#eef3fa" stroke="#8aa0c0" stroke-width="1"/><path d="M2 8 Q12 -1 22 8" fill="none" stroke="#c8925a" stroke-width="1.6"/><circle cx="12" cy="9" r="5.2" fill="#6a88b8"/><circle cx="12" cy="9" r="2.3" fill="#1a2638"/><circle cx="10.5" cy="7.5" r="1" fill="#fff"/></svg></div><div id="ghead"><div class="rh"></div><div class="sep2"></div><div class="c1">Variable</div><div class="c2">Wert</div></div><div id="grid"><div class="grow" style="top:0.00px"><div class="gicon"><svg width="22" height="22" viewBox="0 0 22 22" style=""><rect x="7" y="3" width="12" height="12" rx="2" transform="rotate(45 13 9)" fill="#f8d77a"/><rect x="4" y="5" width="12" height="12" rx="2" transform="rotate(45 10 11)" fill="url(#gTag)"/><path d="M16.5 5.5 A4.8 4.8 0 0 1 17 15.5" fill="none" stroke="#6a6a70" stroke-width="1.4"/></svg></div><div class="gv">{@DirectoryApplicationData}</div><div class="gw">C:\Users\LogiSoft\App</div></div><div class="grow" style="top:27.45px"><div class="gicon"><svg width="22" height="22" viewBox="0 0 22 22" style=""><rect x="7" y="3" width="12" height="12" rx="2" transform="rotate(45 13 9)" fill="#f8d77a"/><rect x="4" y="5" width="12" height="12" rx="2" transform="rotate(45 10 11)" fill="url(#gTag)"/><path d="M16.5 5.5 A4.8 4.8 0 0 1 17 15.5" fill="none" stroke="#6a6a70" stroke-width="1.4"/></svg></div><div class="gv">{@DirectoryProgramFiles}</div><div class="gw">C:\Program Files (x86)</div></div><div class="grow" style="top:54.90px"><div class="gicon"><svg width="22" height="22" viewBox="0 0 22 22" style=""><rect x="7" y="3" width="12" height="12" rx="2" transform="rotate(45 13 9)" fill="#f8d77a"/><rect x="4" y="5" width="12" height="12" rx="2" transform="rotate(45 10 11)" fill="url(#gTag)"/><path d="M16.5 5.5 A4.8 4.8 0 0 1 17 15.5" fill="none" stroke="#6a6a70" stroke-width="1.4"/></svg></div><div class="gv">{@DirectoryUserProfile}</div><div class="gw">C:\Users\LogiSoft</div></div><div class="grow" style="top:82.35px"><div class="gicon"><svg width="22" height="22" viewBox="0 0 22 22" style=""><rect x="7" y="3" width="12" height="12" rx="2" transform="rotate(45 13 9)" fill="#f8d77a"/><rect x="4" y="5" width="12" height="12" rx="2" transform="rotate(45 10 11)" fill="url(#gTag)"/><path d="M16.5 5.5 A4.8 4.8 0 0 1 17 15.5" fill="none" stroke="#6a6a70" stroke-width="1.4"/></svg></div><div class="gv">{@ComputerName}</div><div class="gw">DEVWIN10</div></div><div class="grow" style="top:109.80px"><div class="gicon"><svg width="22" height="22" viewBox="0 0 22 22" style=""><rect x="7" y="3" width="12" height="12" rx="2" transform="rotate(45 13 9)" fill="#f8d77a"/><rect x="4" y="5" width="12" height="12" rx="2" transform="rotate(45 10 11)" fill="url(#gTag)"/><path d="M16.5 5.5 A4.8 4.8 0 0 1 17 15.5" fill="none" stroke="#6a6a70" stroke-width="1.4"/></svg></div><div class="gv">{@ComputerUser}</div><div class="gw">LogiSoft</div></div><div class="grow" style="top:137.25px"><div class="gicon"><svg width="22" height="22" viewBox="0 0 22 22" style=""><rect x="7" y="3" width="12" height="12" rx="2" transform="rotate(45 13 9)" fill="#f8d77a"/><rect x="4" y="5" width="12" height="12" rx="2" transform="rotate(45 10 11)" fill="url(#gTag)"/><path d="M16.5 5.5 A4.8 4.8 0 0 1 17 15.5" fill="none" stroke="#6a6a70" stroke-width="1.4"/></svg></div><div class="gv">{@ComputerDomain}</div><div class="gw">DEVWIN10</div></div><div class="grow" style="top:164.70px"><div class="gicon"><svg width="22" height="22" viewBox="0 0 22 22" style=""><rect x="7" y="3" width="12" height="12" rx="2" transform="rotate(45 13 9)" fill="#f8d77a"/><rect x="4" y="5" width="12" height="12" rx="2" transform="rotate(45 10 11)" fill="url(#gTag)"/><path d="M16.5 5.5 A4.8 4.8 0 0 1 17 15.5" fill="none" stroke="#6a6a70" stroke-width="1.4"/></svg></div><div class="gv">{@Is64BitOperatingSystem}</div><div class="gw">True</div></div><div class="grow" style="top:192.15px"><div class="gicon"><svg width="22" height="22" viewBox="0 0 22 22" style=""><rect x="7" y="3" width="12" height="12" rx="2" transform="rotate(45 13 9)" fill="#f8d77a"/><rect x="4" y="5" width="12" height="12" rx="2" transform="rotate(45 10 11)" fill="url(#gTag)"/><path d="M16.5 5.5 A4.8 4.8 0 0 1 17 15.5" fill="none" stroke="#6a6a70" stroke-width="1.4"/></svg></div><div class="gv">{@InstalledUICulture}</div><div class="gw">de-DE</div></div><div class="grow" style="top:219.60px"><div class="gicon"><svg width="22" height="22" viewBox="0 0 22 22" style=""><rect x="7" y="3" width="12" height="12" rx="2" transform="rotate(45 13 9)" fill="#f8d77a"/><rect x="4" y="5" width="12" height="12" rx="2" transform="rotate(45 10 11)" fill="url(#gTag)"/><path d="M16.5 5.5 A4.8 4.8 0 0 1 17 15.5" fill="none" stroke="#6a6a70" stroke-width="1.4"/></svg></div><div class="gv">{@CommandLine}</div><div class="gw">"C:\Program Files (x86)\LogiSoft</div></div><div class="grow" style="top:247.05px"><div class="gicon"><svg width="22" height="22" viewBox="0 0 22 22" style=""><rect x="7" y="3" width="12" height="12" rx="2" transform="rotate(45 13 9)" fill="#f8d77a"/><rect x="4" y="5" width="12" height="12" rx="2" transform="rotate(45 10 11)" fill="url(#gTag)"/><path d="M16.5 5.5 A4.8 4.8 0 0 1 17 15.5" fill="none" stroke="#6a6a70" stroke-width="1.4"/></svg></div><div class="gv">{@SystemDate}</div><div class="gw red">29.11.2024 22:37:54</div></div><div class="grow" style="top:274.50px"><div class="gicon"><svg width="22" height="22" viewBox="0 0 22 22" style=""><rect x="7" y="3" width="12" height="12" rx="2" transform="rotate(45 13 9)" fill="#f8d77a"/><rect x="4" y="5" width="12" height="12" rx="2" transform="rotate(45 10 11)" fill="url(#gTag)"/><path d="M16.5 5.5 A4.8 4.8 0 0 1 17 15.5" fill="none" stroke="#6a6a70" stroke-width="1.4"/></svg></div><div class="gv">{@SystemMonth}</div><div class="gw">11</div></div><div class="grow" style="top:301.95px"><div class="gicon"><svg width="22" height="22" viewBox="0 0 22 22" style=""><rect x="7" y="3" width="12" height="12" rx="2" transform="rotate(45 13 9)" fill="#f8d77a"/><rect x="4" y="5" width="12" height="12" rx="2" transform="rotate(45 10 11)" fill="url(#gTag)"/><path d="M16.5 5.5 A4.8 4.8 0 0 1 17 15.5" fill="none" stroke="#6a6a70" stroke-width="1.4"/></svg></div><div class="gv">{@SystemDay}</div><div class="gw">29</div></div><div class="grow" style="top:329.40px"><div class="gicon"><svg width="22" height="22" viewBox="0 0 22 22" style=""><rect x="7" y="3" width="12" height="12" rx="2" transform="rotate(45 13 9)" fill="#f8d77a"/><rect x="4" y="5" width="12" height="12" rx="2" transform="rotate(45 10 11)" fill="url(#gTag)"/><path d="M16.5 5.5 A4.8 4.8 0 0 1 17 15.5" fill="none" stroke="#6a6a70" stroke-width="1.4"/></svg></div><div class="gv">{@SystemYear}</div><div class="gw">2024</div></div><div class="grow" style="top:356.85px"><div class="gicon"><svg width="22" height="22" viewBox="0 0 22 22" style=""><rect x="7" y="3" width="12" height="12" rx="2" transform="rotate(45 13 9)" fill="#f8d77a"/><rect x="4" y="5" width="12" height="12" rx="2" transform="rotate(45 10 11)" fill="url(#gTag)"/><path d="M16.5 5.5 A4.8 4.8 0 0 1 17 15.5" fill="none" stroke="#6a6a70" stroke-width="1.4"/></svg></div><div class="gv">{@SystemHour}</div><div class="gw">22</div></div><div class="grow" style="top:384.30px"><div class="gicon"><svg width="22" height="22" viewBox="0 0 22 22" style=""><rect x="7" y="3" width="12" height="12" rx="2" transform="rotate(45 13 9)" fill="#f8d77a"/><rect x="4" y="5" width="12" height="12" rx="2" transform="rotate(45 10 11)" fill="url(#gTag)"/><path d="M16.5 5.5 A4.8 4.8 0 0 1 17 15.5" fill="none" stroke="#6a6a70" stroke-width="1.4"/></svg></div><div class="gv">{@SystemMinute}</div><div class="gw">37</div></div><div class="grow" style="top:411.75px"><div class="gicon"><svg width="22" height="22" viewBox="0 0 22 22" style=""><rect x="7" y="3" width="12" height="12" rx="2" transform="rotate(45 13 9)" fill="#f8d77a"/><rect x="4" y="5" width="12" height="12" rx="2" transform="rotate(45 10 11)" fill="url(#gTag)"/><path d="M16.5 5.5 A4.8 4.8 0 0 1 17 15.5" fill="none" stroke="#6a6a70" stroke-width="1.4"/></svg></div><div class="gv">{@SystemSecond}</div><div class="gw red">54</div></div><div class="grow" style="top:439.20px"><div class="gicon"><svg width="22" height="22" viewBox="0 0 22 22" style=""><rect x="7" y="3" width="12" height="12" rx="2" transform="rotate(45 13 9)" fill="#f8d77a"/><rect x="4" y="5" width="12" height="12" rx="2" transform="rotate(45 10 11)" fill="url(#gTag)"/><path d="M16.5 5.5 A4.8 4.8 0 0 1 17 15.5" fill="none" stroke="#6a6a70" stroke-width="1.4"/></svg></div><div class="gv">{@CurrentCount}</div><div class="gw">10</div></div><div class="grow" style="top:466.65px"><div class="gicon"><svg width="22" height="22" viewBox="0 0 22 22" style=""><rect x="7" y="3" width="12" height="12" rx="2" transform="rotate(45 13 9)" fill="#f8d77a"/><rect x="4" y="5" width="12" height="12" rx="2" transform="rotate(45 10 11)" fill="url(#gTag)"/><path d="M16.5 5.5 A4.8 4.8 0 0 1 17 15.5" fill="none" stroke="#6a6a70" stroke-width="1.4"/></svg></div><div class="gv">{@myString}</div><div class="gw">Hans,Peter,Klaus,Timo,Andreas,Oliver</div></div><div class="grow sel" style="top:494.10px"><div class="gicon"><svg width="22" height="22" viewBox="0 0 22 22" style=""><circle cx="10" cy="10" r="7.5" fill="url(#gLens)" stroke="#5a88c8" stroke-width="1.4"/><path d="M15 15 L21 21" stroke="#d8a050" stroke-width="3.5" stroke-linecap="round"/></svg></div><div class="gv">{@myData}</div><div class="gw">Datensätze: 6</div></div></div><div class="vscroll gsb" style="left:1973px;top:681px;height:526px"><svg class="up" viewBox="0 0 13 8"><path d="M1 7 L6.5 1.5 L12 7" fill="none" stroke="#b4b4b4" stroke-width="2"/></svg><div class="thumb" style="top:286px;height:214px"></div><svg class="dn" viewBox="0 0 13 8"><path d="M1 1 L6.5 6.5 L12 1" fill="none" stroke="#b4b4b4" stroke-width="2"/></svg></div></body></html>
